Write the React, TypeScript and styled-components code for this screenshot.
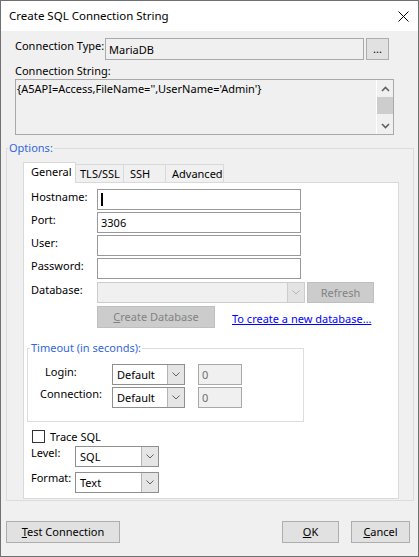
import React from "react";
import styled, { createGlobalStyle } from "styled-components";

const GlobalStyle = createGlobalStyle`
  *, *::before, *::after { box-sizing: border-box; }
  html, body { margin: 0; padding: 0; background: #ffffff; }
  body {
    font-family: "Noto Sans", "Segoe UI", sans-serif;
    font-size: 11px;
    color: #000000;
  }
`;

const Window = styled.div`
  width: 419px;
  height: 557px;
  border: 1px solid #707070;
  background: #f0f0f0;
  display: flex;
  flex-direction: column;
`;

const TitleBar = styled.div`
  flex: none;
  height: 30px;
  background: #ffffff;
  display: flex;
  align-items: center;
  justify-content: space-between;
  padding: 0 9px 0 8px;
  font-size: 11.5px;
  line-height: 16px;
`;

const Body = styled.div`
  flex: 1;
  display: flex;
  flex-direction: column;
  padding-top: 7px;
`;

const Label = styled.span<{ $indent?: number; $shift?: number }>`
  display: block;
  line-height: 16px;
  white-space: nowrap;
  padding-left: ${(p) => p.$indent ?? 0}px;
  margin-top: ${(p) => p.$shift ?? 0}px;
`;

const TopRow = styled.div`
  display: flex;
  align-items: flex-start;
  margin-left: 14px;
  gap: 2px;
`;

const TypeLabel = styled(Label)`
  width: 88px;
`;

const TextBox = styled.div<{ $w: number; $h?: number; $readOnly?: boolean; $disabled?: boolean }>`
  width: ${(p) => p.$w}px;
  height: ${(p) => p.$h ?? 21}px;
  border: 1px solid ${(p) => (p.$disabled ? "#cccccc" : p.$readOnly ? "#a9a9a9" : "#999999")};
  background: ${(p) => (p.$readOnly || p.$disabled ? "#f0f0f0" : "#ffffff")};
  color: ${(p) => (p.$disabled ? "#6d6d6d" : "#000000")};
  padding: 0 3px;
  line-height: 19px;
  white-space: nowrap;
  display: flex;
  align-items: center;
`;

const MutedValue = styled.span`
  color: #6d6d6d;
`;

const Caret = styled.span`
  width: 2px;
  height: 13px;
  background: #000000;
`;

const Button = styled.div<{ $w: number; $h?: number; $disabled?: boolean }>`
  width: ${(p) => p.$w}px;
  height: ${(p) => p.$h ?? 22}px;
  flex: none;
  border: 1px solid ${(p) => (p.$disabled ? "#bfbfbf" : "#adadad")};
  background: ${(p) => (p.$disabled ? "#cccccc" : "#e1e1e1")};
  color: ${(p) => (p.$disabled ? "#838383" : "#000000")};
  display: flex;
  align-items: center;
  justify-content: center;
  line-height: 16px;
  white-space: nowrap;
`;

const SectionLabel = styled(Label)`
  margin: 3px 0 0 14px;
`;

const MemoBox = styled.div`
  margin-left: 14px;
  width: 379px;
  height: 56px;
  border: 1px solid #a9a9a9;
  background: #f0f0f0;
  display: flex;
`;

const MemoText = styled.div`
  flex: 1;
  padding: 1px 1px 0 1px;
  line-height: 16px;
  white-space: nowrap;
`;

const ScrollBar = styled.div`
  width: 17px;
  border-left: 1px solid #ffffff;
  display: flex;
  flex-direction: column;
`;

const ScrollArrow = styled.div`
  height: 17px;
  display: flex;
  align-items: center;
  justify-content: center;
`;

const ScrollThumb = styled.div`
  height: 17px;
  background: #cdcdcd;
`;

const ScrollTrack = styled.div`
  flex: 1;
`;

const GroupBox = styled.fieldset<{ $w: number; $padTop: number; $padBottom: number }>`
  width: ${(p) => p.$w}px;
  margin: 0;
  border: 1px solid #dcdcdc;
  padding: ${(p) => p.$padTop}px 0 ${(p) => p.$padBottom}px 0;
  min-width: 0;
`;

const OptionsBox = styled(GroupBox)`
  margin: 5px 0 0 5px;
`;

const TimeoutBox = styled(GroupBox)`
  margin-top: 12px;
`;

const Legend = styled.legend<{ $offset: number }>`
  color: #3366dd;
  line-height: 16px;
  padding: 0 1px;
  margin-left: ${(p) => p.$offset}px;
`;

const TabStrip = styled.div`
  display: flex;
  align-items: flex-end;
  height: 20px;
  margin-left: 16px;
`;

const Tab = styled.div<{ $w: number; $pad: number; $active?: boolean }>`
  width: ${(p) => p.$w}px;
  height: ${(p) => (p.$active ? 21 : 18)}px;
  margin-bottom: ${(p) => (p.$active ? -1 : 0)}px;
  position: relative;
  z-index: ${(p) => (p.$active ? 1 : 0)};
  border: 1px solid #d9d9d9;
  border-bottom: none;
  background: ${(p) => (p.$active ? "#ffffff" : "#f0f0f0")};
  padding-left: ${(p) => p.$pad}px;
  line-height: 18px;
  white-space: nowrap;
  & + & {
    margin-left: -1px;
  }
`;

const TabPanel = styled.div`
  margin-left: 16px;
  width: 376px;
  border: 1px solid #d9d9d9;
  background: #ffffff;
  padding: 6px 0 5px 3px;
  display: flex;
  flex-direction: column;
`;

const FieldGrid = styled.div`
  margin-left: 4px;
  display: grid;
  grid-template-columns: 66px auto;
  row-gap: 2px;
  align-items: start;
`;

const Inline = styled.div<{ $shift?: number; $gap: number }>`
  display: flex;
  gap: ${(p) => p.$gap}px;
  margin-top: ${(p) => p.$shift ?? 0}px;
`;

const Combo = styled.div<{ $w: number; $disabled?: boolean }>`
  width: ${(p) => p.$w}px;
  height: 21px;
  flex: none;
  display: flex;
  border: 1px solid ${(p) => (p.$disabled ? "#cccccc" : "#8f8f8f")};
  background: ${(p) => (p.$disabled ? "#f0f0f0" : "#ffffff")};
`;

const ComboText = styled.span`
  flex: 1;
  padding-left: 4px;
  line-height: 19px;
  white-space: nowrap;
`;

const ComboButton = styled.span<{ $disabled?: boolean }>`
  width: 17px;
  border-left: 1px solid ${(p) => (p.$disabled ? "#cccccc" : "#b4b4b4")};
  background: ${(p) => (p.$disabled ? "#e3e3e3" : "#e5e5e5")};
  display: flex;
  align-items: center;
  justify-content: center;
`;

const ActionRow = styled.div`
  display: flex;
  align-items: center;
  margin: 3px 0 0 70px;
`;

const Link = styled.span`
  margin-left: 17px;
  padding-top: 4px;
  color: #0000ff;
  text-decoration: underline;
  line-height: 16px;
  white-space: nowrap;
`;

const TimeoutGrid = styled.div`
  display: grid;
  grid-template-columns: 84px 73px 13px 44px;
  row-gap: 2px;
  align-items: start;
`;

const GridCell = styled.div<{ $col: number }>`
  grid-column: ${(p) => p.$col};
`;

const CheckRow = styled.div`
  display: flex;
  align-items: center;
  gap: 5px;
  margin: 8px 0 0 5px;
  height: 13px;
`;

const CheckBox = styled.span`
  width: 13px;
  height: 13px;
  border: 1px solid #333333;
  background: #ffffff;
`;

const TraceGrid = styled.div`
  display: grid;
  grid-template-columns: 44px 84px;
  row-gap: 5px;
  margin: 3px 0 0 4px;
  align-items: start;
`;

const Footer = styled.div`
  display: flex;
  justify-content: space-between;
  margin-top: 20px;
  padding: 0 8px 0 5px;
`;

const ButtonGroup = styled.div`
  display: flex;
  gap: 12px;
`;

const Chevron = ({ up }: { up?: boolean }) => (
  <svg width="9" height="6" viewBox="0 0 9 6">
    <polyline
      points={up ? "1,5 4.5,1.5 8,5" : "1,1 4.5,4.5 8,1"}
      fill="none"
      stroke="#606060"
      strokeWidth="1.6"
    />
  </svg>
);

const DropArrow = ({ disabled }: { disabled?: boolean }) => (
  <svg width="8" height="5" viewBox="0 0 8 5">
    <polyline points="0.5,0.5 4,4 7.5,0.5" fill="none" stroke={disabled ? "#b4b4b4" : "#606060"} strokeWidth="1" />
  </svg>
);

const CloseIcon = () => (
  <svg width="11" height="11" viewBox="0 0 11 11">
    <path d="M0.5 0.5 L10.5 10.5 M10.5 0.5 L0.5 10.5" stroke="#000" strokeWidth="1" />
  </svg>
);

const ComboBox = ({ w, value, disabled }: { w: number; value?: string; disabled?: boolean }) => (
  <Combo $w={w} $disabled={disabled}>
    <ComboText>{value}</ComboText>
    <ComboButton $disabled={disabled}>
      <DropArrow disabled={disabled} />
    </ComboButton>
  </Combo>
);

const timeouts = [
  { label: "Login:", indent: 17, shift: 0 },
  { label: "Connection:", indent: 12, shift: -1 },
];

export default function App() {
  return (
    <>
      <GlobalStyle />
      <Window>
        <TitleBar>
          <span>Create SQL Connection String</span>
          <CloseIcon />
        </TitleBar>
        <Body>
          <TopRow>
            <TypeLabel>Connection Type:</TypeLabel>
            <TextBox $w={259} $h={22} $readOnly>
              MariaDB
            </TextBox>
            <Button $w={23}>...</Button>
          </TopRow>

          <SectionLabel>Connection String:</SectionLabel>
          <MemoBox>
            <MemoText>{"{A5API=Access,FileName='',UserName='Admin'}"}</MemoText>
            <ScrollBar>
              <ScrollArrow>
                <Chevron up />
              </ScrollArrow>
              <ScrollThumb />
              <ScrollTrack />
              <ScrollArrow>
                <Chevron />
              </ScrollArrow>
            </ScrollBar>
          </MemoBox>

          <OptionsBox $w={408} $padTop={6} $padBottom={1}>
            <Legend $offset={1}>Options:</Legend>
            <TabStrip>
              <Tab $w={53} $pad={7} $active>
                General
              </Tab>
              <Tab $w={49} $pad={4}>
                TLS/SSL
              </Tab>
              <Tab $w={43} $pad={6}>
                SSH
              </Tab>
              <Tab $w={59} $pad={6}>
                Advanced
              </Tab>
            </TabStrip>
            <TabPanel>
              <FieldGrid>
                <Label>Hostname:</Label>
                <TextBox $w={204}>
                  <Caret />
                </TextBox>
                <Label>Port:</Label>
                <TextBox $w={204}>3306</TextBox>
                <Label>User:</Label>
                <TextBox $w={204} />
                <Label>Password:</Label>
                <TextBox $w={204} />
                <Label $shift={1}>Database:</Label>
                <Inline $shift={1} $gap={2}>
                  <ComboBox w={208} disabled />
                  <Button $w={67} $h={21} $disabled>
                    Refresh
                  </Button>
                </Inline>
              </FieldGrid>

              <ActionRow>
                <Button $w={118} $disabled>
                  <span>
                    <u>C</u>reate Database
                  </span>
                </Button>
                <Link>To create a new database…</Link>
              </ActionRow>

              <TimeoutBox $w={277} $padTop={8} $padBottom={13}>
                <Legend $offset={2}>Timeout (in seconds):</Legend>
                <TimeoutGrid>
                  {timeouts.map((t) => (
                    <React.Fragment key={t.label}>
                      <Label $indent={t.indent} $shift={t.shift}>
                        {t.label}
                      </Label>
                      <ComboBox w={73} value="Default" />
                      <GridCell $col={4}>
                        <TextBox $w={44} $readOnly>
                          <MutedValue>0</MutedValue>
                        </TextBox>
                      </GridCell>
                    </React.Fragment>
                  ))}
                </TimeoutGrid>
              </TimeoutBox>

              <CheckRow>
                <CheckBox />
                <Label>Trace SQL</Label>
              </CheckRow>

              <TraceGrid>
                <Label $shift={-1}>Level:</Label>
                <ComboBox w={84} value="SQL" />
                <Label $shift={-2}>Format:</Label>
                <ComboBox w={84} value="Text" />
              </TraceGrid>
            </TabPanel>
          </OptionsBox>

          <Footer>
            <Button $w={114}>
              <span>
                <u>T</u>est Connection
              </span>
            </Button>
            <ButtonGroup>
              <Button $w={57}>
                <span>
                  <u>O</u>K
                </span>
              </Button>
              <Button $w={59}>
                <span>
                  <u>C</u>ancel
                </span>
              </Button>
            </ButtonGroup>
          </Footer>
        </Body>
      </Window>
    </>
  );
}
